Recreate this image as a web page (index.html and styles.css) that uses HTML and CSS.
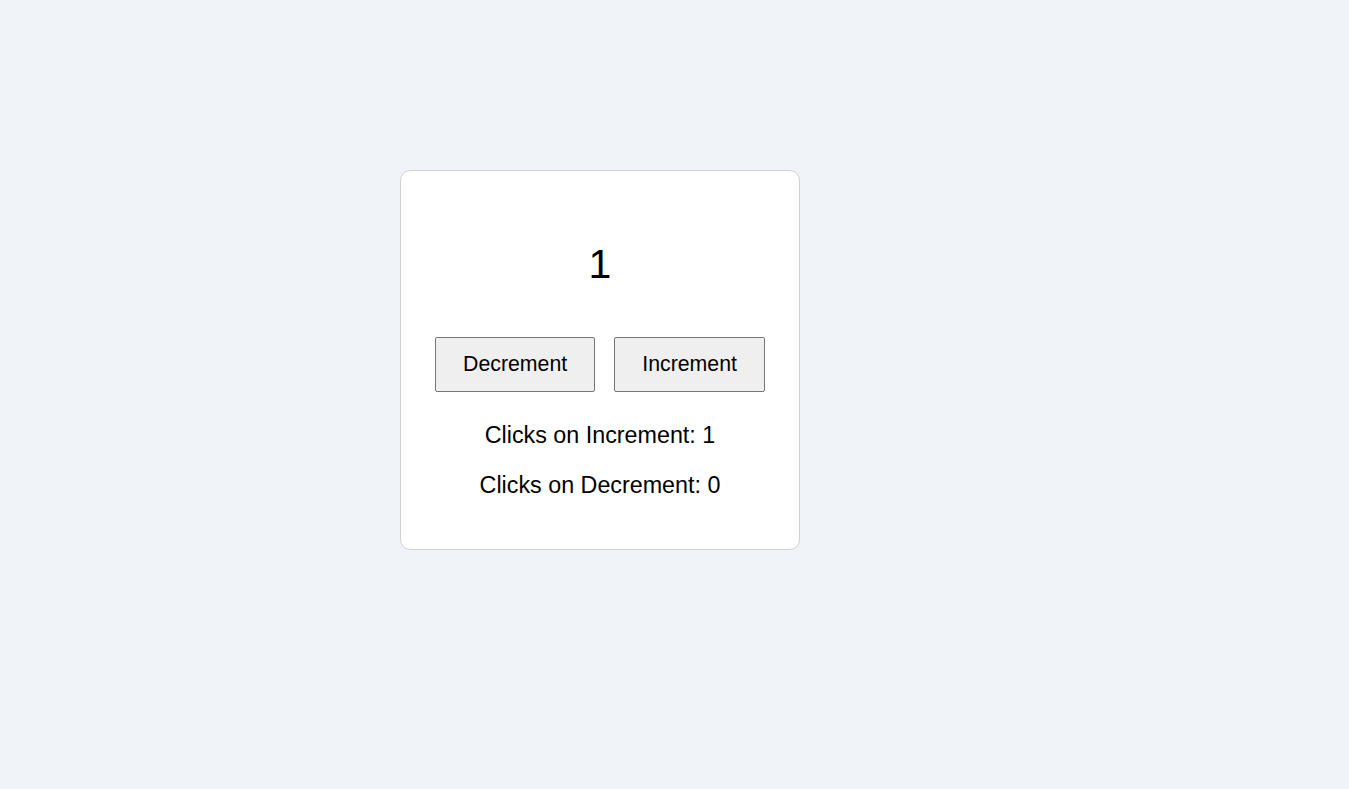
FILE: index.html
```html
<!DOCTYPE html>
<html lang="en">
<head>
<meta charset="utf-8">
<title>Counter</title>
<link rel="stylesheet" href="styles.css">
</head>
<body>
<main class="page">
  <section class="card">
    <h1 class="count">1</h1>
    <div class="actions">
      <button class="btn" type="button">Decrement</button>
      <button class="btn" type="button">Increment</button>
    </div>
    <p class="stat">Clicks on Increment: 1</p>
    <p class="stat">Clicks on Decrement: 0</p>
  </section>
</main>
</body>
</html>
```
FILE: styles.css
```css
html, body {
  margin: 0;
  padding: 0;
}
body {
  background: #f0f3f7;
  font-family: "Liberation Sans", Arial, sans-serif;
  color: #000;
  min-height: 100vh;
}
.page {
  padding: 170px 0 0 400px;
}
.card {
  box-sizing: border-box;
  width: 400px;
  height: 380px;
  background: #fff;
  border: 1px solid #d0d0d0;
  border-radius: 10px;
  padding: 70px 0 0;
  display: flex;
  flex-direction: column;
  align-items: center;
}
.count {
  margin: 0;
  font-size: 41px;
  font-weight: normal;
  line-height: 46px;
}
.actions {
  display: flex;
  justify-content: center;
  gap: 19px;
  margin-top: 50px;
}
.btn {
  font-family: "Liberation Sans", Arial, sans-serif;
  font-size: 21.3px;
  line-height: 23px;
  padding: 15px 27px;
  color: #000;
  background: #efefef;
  border: 1px solid #767676;
  border-radius: 2px;
}
.stat {
  margin: 30px 0 0;
  font-size: 23.3px;
  line-height: 26px;
}
.stat + .stat {
  margin-top: 24px;
}
```
